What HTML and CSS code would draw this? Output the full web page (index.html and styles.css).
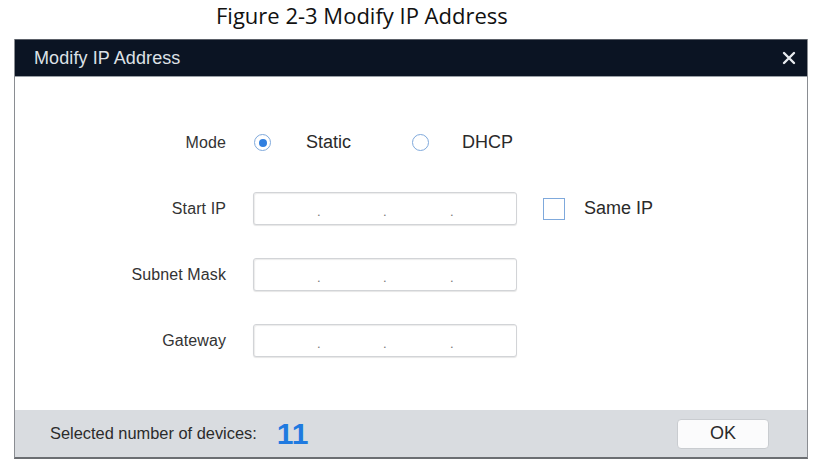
FILE: index.html
```html
<!DOCTYPE html>
<html>
<head>
<meta charset="utf-8">
<link rel="stylesheet" href="styles.css">
</head>
<body>
<div class="caption">Figure 2-3 Modify IP Address</div>
<div class="dialog">
  <div class="titlebar">
    <span class="title">Modify IP Address</span>
    <svg class="close" width="14" height="14" viewBox="0 0 14 14"><path d="M2 2 L12 12 M12 2 L2 12" stroke="#e8ebef" stroke-width="2.4" stroke-linecap="round"/></svg>
  </div>
  <div class="content">
    <div class="row">
      <div class="label">Mode</div>
      <div class="field mode">
        <span class="radio checked"></span><span class="opt">Static</span>
        <span class="radio"></span><span class="opt">DHCP</span>
      </div>
    </div>
    <div class="row">
      <div class="label">Start IP</div>
      <div class="field">
        <div class="ipbox"><span>.</span><span>.</span><span>.</span></div>
        <span class="check"></span><span class="opt">Same IP</span>
      </div>
    </div>
    <div class="row">
      <div class="label">Subnet Mask</div>
      <div class="field">
        <div class="ipbox"><span>.</span><span>.</span><span>.</span></div>
      </div>
    </div>
    <div class="row">
      <div class="label">Gateway</div>
      <div class="field">
        <div class="ipbox"><span>.</span><span>.</span><span>.</span></div>
      </div>
    </div>
  </div>
  <div class="footer">
    <span class="sel">Selected number of devices:</span>
    <span class="count">11</span>
    <button class="ok">OK</button>
  </div>
</div>
</body>
</html>
```
FILE: styles.css
```css
html, body {
  margin: 0;
  padding: 0;
  background: #ffffff;
}
body {
  width: 819px;
  height: 471px;
  overflow: hidden;
  font-family: "Liberation Sans", Arial, sans-serif;
}
.caption {
  font-family: "Open Sans", "Noto Sans", sans-serif;
  font-size: 22px;
  color: #111;
  height: 39px;
  line-height: 31px;
  padding-left: 216px;
  box-sizing: border-box;
  letter-spacing: 0;
}
.dialog {
  margin-left: 14px;
  width: 794px;
  box-sizing: border-box;
  border-left: 1px solid #8a8d92;
  border-right: 1px solid #8a8d92;
  border-bottom: 2px solid #6b6e72;
}
.titlebar {
  height: 38px;
  background: #0b1423;
  display: flex;
  align-items: center;
  justify-content: space-between;
  padding: 0 11px 0 19px;
  border-top: 1px solid #5b6068;
  border-bottom: 1px solid #9aa0a6;
  box-sizing: border-box;
}
.title {
  color: #dde1e6;
  font-size: 18px;
  letter-spacing: 0.1px;
}
.close {
  display: block;
}
.content {
  height: 333px;
  box-sizing: border-box;
  padding-top: 49px;
  display: flex;
  flex-direction: column;
  gap: 33px;
  background: #fff;
}
.row {
  display: flex;
  align-items: center;
  height: 33px;
}
.label {
  width: 211px;
  text-align: right;
  font-size: 16px;
  color: #333;
  letter-spacing: 0.1px;
}
.field {
  margin-left: 27px;
  display: flex;
  align-items: center;
}
.radio {
  width: 15px;
  height: 15px;
  border: 1.5px solid #7fa9dc;
  border-radius: 50%;
  box-sizing: content-box;
  position: relative;
  margin-left: 1px;
}
.radio.checked::after {
  content: "";
  position: absolute;
  left: 3.5px;
  top: 3.5px;
  width: 8px;
  height: 8px;
  border-radius: 50%;
  background: #2f7fe0;
}
.mode .opt:nth-child(2) {
  margin-left: 35px;
}
.mode .radio:nth-child(3) {
  margin-left: 61px;
}
.mode .opt:nth-child(4) {
  margin-left: 33px;
}
.opt {
  font-size: 18px;
  color: #2a2a2a;
  letter-spacing: 0;
}
.ipbox {
  width: 264px;
  height: 33px;
  box-sizing: border-box;
  border: 1px solid #d2d4d7;
  border-radius: 3px;
  box-shadow: inset 1px 1px 1px rgba(0,0,0,0.08), 0 1px 1px rgba(0,0,0,0.1);
  position: relative;
  background: #fff;
}
.ipbox span {
  position: absolute;
  top: 11px;
  font-size: 13px;
  color: #777;
}
.ipbox span:nth-child(1) { left: 63px; }
.ipbox span:nth-child(2) { left: 129px; }
.ipbox span:nth-child(3) { left: 196px; }
.check {
  width: 20px;
  height: 20px;
  border: 1.5px solid #7fa9dc;
  margin-left: 26px;
  box-sizing: content-box;
}
.check + .opt {
  margin-left: 19px;
}
.footer {
  height: 47px;
  background: #d9dce0;
  display: flex;
  align-items: center;
  padding-left: 35px;
  padding-right: 38px;
}
.sel {
  font-size: 16.4px;
  color: #2b2b2b;
  letter-spacing: 0;
}
.count {
  font-size: 30px;
  font-weight: bold;
  color: #1f7ae0;
  margin-left: 20px;
}
.ok {
  margin-left: auto;
  width: 92px;
  height: 30px;
  background: #fbfbfc;
  border: 1px solid #c9ccd0;
  border-radius: 4px;
  font-family: "Liberation Sans", Arial, sans-serif;
  font-size: 18px;
  color: #2a2a2a;
  padding: 0;
}
```
